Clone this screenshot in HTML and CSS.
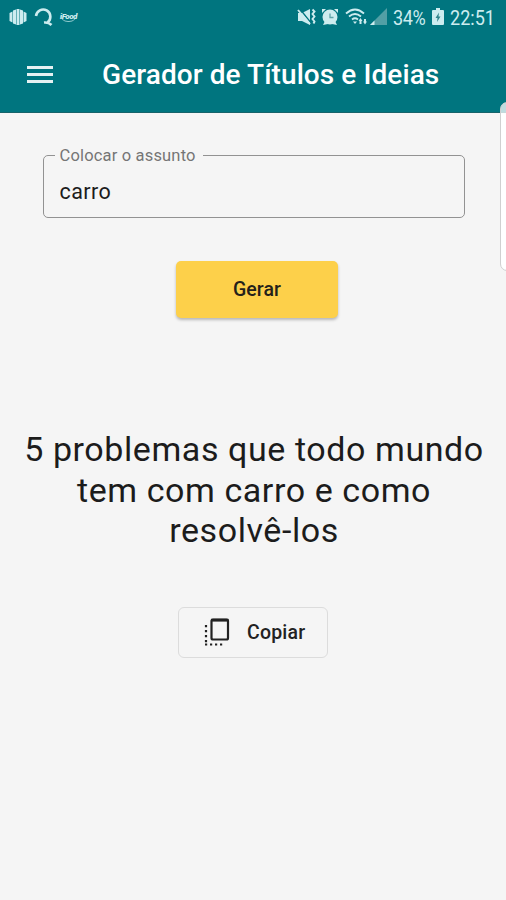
FILE: index.html
```html
<!DOCTYPE html>
<html lang="pt-BR">
<head>
  <meta charset="UTF-8">
  <title>Gerador de Títulos e Ideias</title>
  <link rel="stylesheet" href="styles.css">
</head>

<body>

  <header>
    <div class="status-bar">
      <div class="status-left">
        <svg width="20" height="20" viewBox="0 0 20 20" fill="#cdecef">
          <path d="M1.500 6l3-1.500v11l-3-1.500zM5 3.500l3-1v15l-3-1zM8.500 2h3v16h-3zM12 2.500l3 1v13l-3 1zM15.500 4.500l3 1.500v8l-3 1.500z"/>
        </svg>
        <svg width="20" height="20" viewBox="0 0 20 20" fill="none" stroke="#cdecef" stroke-width="2.600">
          <path d="M2 9a7.200 7.200 0 1 1 11.500 6.500M10 15.500q4.500-.500 7.500 2.500"/>
        </svg>
        <span class="tiny-logo">iFood</span>
      </div>
      <div class="status-right">
        <svg class="mute-icon" width="20" height="20" viewBox="0 0 20 20" fill="#cdecef">
          <path d="M1 6h4l8-4v16l-8-4H1z"/>
          <path d="M2.500 1.500l12 15" stroke="#00757f" stroke-width="1.300"/>
          <path d="M1 3l12 14M15.500 2.500l2 2-2 2.500 2 2.500-2 2.500 2 2.500-1 2" fill="none" stroke="#cdecef" stroke-width="1.900"/>
        </svg>
        <svg class="alarm-icon" width="18" height="18" viewBox="0 0 18 18">
          <path d="M1 5V1h4zM17 5V1h-4zM2 17l2-4 3 3zM16 17l-2-4-3 3z" fill="#cdecef"/>
          <circle cx="9" cy="9" r="7.500" fill="#cdecef"/>
          <path d="M9 5.500v4h3.500" fill="none" stroke="#5fa3a8" stroke-width="1.300"/>
        </svg>
        <svg class="wifi-icon" width="23" height="20" viewBox="0 0 23 20" fill="none" stroke="#cdecef" stroke-width="1.800">
          <path d="M1 6.500q9-8 18 0M4 9.500q6-5 12 0M7 12.500q3-2.500 6 0"/>
          <path d="M8 14.500h4l-2 2.500z" fill="#cdecef" stroke="none"/>
          <path d="M13.500 14l2-3 2 3h-1v3h-2v-3zM18 14.500h1V12h2v2.500h1l-2 3z" fill="#cdecef" stroke="none"/>
        </svg>
        <svg class="signal-icon" width="18" height="18" viewBox="0 0 18 18">
          <path d="M17 0v17H0z" fill="#529fa5"/>
          <path d="M4.500 12.500V17H0z" fill="#cdecef"/>
        </svg>
        <span class="battery-text">34%</span>
        <svg class="battery-icon" width="12" height="18" viewBox="0 0 12 18">
          <path d="M4 0h4v2h3q1 0 1 1v13q0 1-1 1H1q-1 0-1-1V3q0-1 1-1h3z" fill="#cdecef"/>
          <path d="M7 4.500L3.500 10h2L5 14l3.500-5.500h-2z" fill="#32858c"/>
        </svg>
        <span class="clock">22:51</span>
      </div>
    </div>

    <div class="app-bar">
      <button class="menu-button" aria-label="Menu">
        <span></span>
        <span></span>
        <span></span>
      </button>
      <h1>Gerador de Títulos e Ideias</h1>
    </div>
  </header>

  <main>
    <fieldset class="text-field">
      <legend>Colocar o assunto</legend>
      <input type="text" value="carro" aria-label="Colocar o assunto">
    </fieldset>

    <button class="generate-button">Gerar</button>

    <p class="result">5 problemas que todo mundo<br>tem com carro e como<br>resolvê-los</p>

    <button class="copy-button">
      <svg width="26" height="30" viewBox="0 0 26 30" fill="none" stroke="#222">
        <rect x="7.500" y="2.500" width="16.500" height="20" rx="1.500" stroke-width="2.200"/>
        <path d="M7 3.200h17.500" stroke-width="2.800"/>
        <path d="M2 8v18" stroke-width="2.200" stroke-dasharray="2.200 2.800"/>
        <path d="M1 27.500h18" stroke-width="2.200" stroke-dasharray="2.200 2.800"/>
      </svg>
      <span>Copiar</span>
    </button>
  </main>

  <!-- Edge panel handle -->
  <div class="edge-panel"></div>

</body>
</html>
```
FILE: styles.css
```css
* {
  box-sizing: border-box;
}

body {
  position: relative;
  margin: 0;
  height: 900px;
  overflow: hidden;
  font-family: Roboto, sans-serif;
  background: #f5f5f5;
  color: #1c1c1c;
}

button {
  font-family: inherit;
  cursor: pointer;
}

header {
  height: 113px;
  background: #00757f;
  border-bottom: 1px solid #17636a;
}

.status-bar {
  display: flex;
  justify-content: space-between;
  align-items: center;
  height: 34px;
  padding: 0 10px 0 8px;
  color: #cdecef;
}

.status-left {
  display: flex;
  align-items: center;
  gap: 6px;
}

.tiny-logo {
  font-size: 8px;
  font-style: italic;
  font-weight: 900;
  letter-spacing: -0.5px;
  border-bottom: 1px solid #8fc8cc;
  border-radius: 0 0 8px 8px;
  line-height: 9px;
}

.status-right {
  display: flex;
  align-items: center;
}

.alarm-icon {
  margin-left: 4px;
}

.wifi-icon {
  margin-left: 6px;
}

.signal-icon {
  margin-left: 2px;
}

.battery-text,
.clock {
  font-size: 21px;
  line-height: 34px;
  white-space: nowrap;
  transform: scaleX(0.86);
  transform-origin: left;
}

.battery-text {
  width: 34px;
  margin: 2px 0 0 5px;
  letter-spacing: -0.5px;
}

.battery-icon {
  margin-left: 5px;
}

.clock {
  width: 46px;
  margin: 2px 0 0 6px;
}

.app-bar {
  display: flex;
  align-items: center;
  height: 79px;
  padding: 0 27px;
}

.menu-button {
  display: flex;
  flex-direction: column;
  gap: 4px;
  width: 26px;
  margin-top: 1px;
  padding: 0;
  background: none;
  border: none;
}

.menu-button span {
  height: 3px;
  background: #e6f1f2;
}

h1 {
  margin: 3px 0 0 49px;
  font-size: 28px;
  font-weight: 500;
  line-height: 34px;
  letter-spacing: 0.08px;
  color: white;
  white-space: nowrap;
}

main {
  display: flex;
  flex-direction: column;
  align-items: center;
  padding: 33px 0 0;
}

.text-field {
  width: 422px;
  height: 72px;
  margin: 0 0 0 1px;
  padding: 0 11px;
  border: 1px solid #929292;
  border-radius: 5px;
}

.text-field legend {
  padding: 0 7px 0 5px;
  font-size: 16.5px;
  line-height: 19px;
  letter-spacing: 0.17px;
  color: #757575;
}

.text-field input {
  display: block;
  width: 100%;
  height: 52px;
  padding: 0 5px;
  border: none;
  outline: none;
  background: none;
  font-family: inherit;
  font-size: 21.5px;
  letter-spacing: 0.4px;
  color: #1c1c1c;
}

.generate-button {
  width: 162px;
  height: 57px;
  margin: 43px 0 0 8px;
  border: none;
  border-radius: 5px;
  background: #fdd04a;
  box-shadow: 0 2px 3px rgba(0, 0, 0, 0.25);
  font-size: 19.5px;
  font-weight: 500;
  letter-spacing: 0.1px;
  color: #24211a;
}

.result {
  margin: 111px 0 0 2px;
  font-size: 34px;
  line-height: 40.5px;
  letter-spacing: 0.58px;
  text-align: center;
}

.copy-button {
  display: flex;
  align-items: center;
  gap: 17px;
  width: 150px;
  height: 51px;
  margin-top: 56px;
  padding: 0 0 0 25px;
  border: 1px solid #dcdcdc;
  border-radius: 6px;
  background: none;
  font-size: 19.5px;
  font-weight: 500;
  letter-spacing: 0.2px;
  color: #222;
}

/* sits over the right side of the screen, partly see-through */
.edge-panel {
  position: absolute;
  top: 102px;
  right: -8px;
  width: 14px;
  height: 169px;
  border: 1px solid #d0d0d0;
  border-radius: 8px;
  background: linear-gradient(rgba(255, 255, 255, 0.75) 10px, white 11px);
}
```
